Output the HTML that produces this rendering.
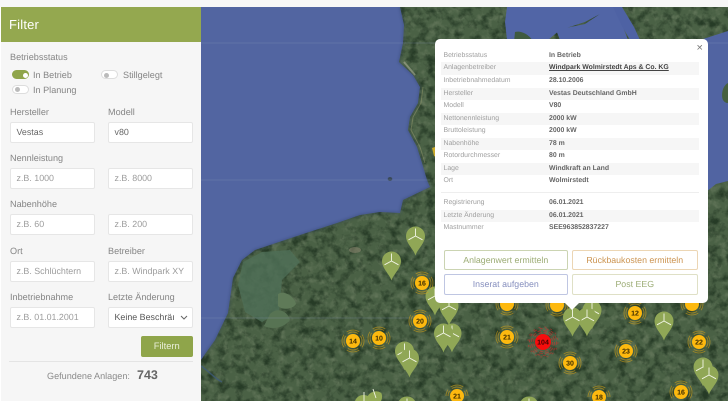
<!DOCTYPE html>
<html><head><meta charset="utf-8"><style>
*{box-sizing:border-box}
html,body{margin:0;padding:0;width:728px;height:401px;overflow:hidden;background:#f7f7f7;font-family:"Liberation Sans",sans-serif;text-rendering:geometricPrecision}
.a{position:absolute;white-space:nowrap}
#side{position:absolute;left:0;top:7px;width:201px;height:394px;background:#f6f6f6;border-left:1px solid #fff}
#head{position:absolute;left:1px;top:7px;width:200px;height:35px;background:#94a84f;color:#fff;font-size:13px;line-height:35px;padding-left:8px;letter-spacing:.2px}
.l{position:absolute;font-size:9.1px;color:#858585;line-height:12px;white-space:nowrap}
.i{position:absolute;width:85.5px;height:21px;background:#fff;border:1px solid #e6e6e6;border-radius:2px;font-size:8.9px;line-height:19px;padding-left:6px;color:#9c9c9c;white-space:nowrap;overflow:hidden}
.v{color:#666}
.t{position:absolute;width:17px;height:9px;border-radius:5px;background:#fff;border:1px solid #ddd}
.t:before{content:"";position:absolute;left:2px;top:1.5px;width:5px;height:5px;border-radius:50%;background:#bbb}
.t.on{background:#8fa54a;border-color:#8fa54a}
.t.on:before{left:10px;background:#fff}
#pop{position:absolute;left:435px;top:39px;width:273px;height:264px;background:#fff;border-radius:5px}
#arrow{position:absolute;left:565px;top:303px;width:0;height:0;border-left:7px solid transparent;border-right:7px solid transparent;border-top:7px solid #fff}
.r{position:absolute;left:441px;width:258px;height:12.5px;font-size:6.9px;line-height:12.5px;color:#a0a0a0}
.r.s{background:#f6f6f6}
.r span{position:absolute;left:2.5px;white-space:nowrap}
.r b{position:absolute;left:108px;color:#666;white-space:nowrap;font-weight:700}
.b{position:absolute;height:20.5px;background:#fff;border-radius:2px;font-size:8.8px;line-height:18.5px;text-align:center;border:1px solid}
</style></head><body>
<svg class="a" style="left:201px;top:7px;filter:blur(.3px)" width="527" height="394" viewBox="201 7 527 394">
<defs>
<filter id="n1" x="0" y="0" width="100%" height="100%" color-interpolation-filters="sRGB"><feTurbulence type="fractalNoise" baseFrequency=".11" numOctaves="4" seed="7"/><feColorMatrix values="0 0 0 0 .15 0 0 0 0 .23 0 0 0 0 .15 2.8 0 0 0 -1.250"/></filter>
<filter id="n2" x="0" y="0" width="100%" height="100%" color-interpolation-filters="sRGB"><feTurbulence type="fractalNoise" baseFrequency=".14" numOctaves="3" seed="21"/><feColorMatrix values="0 0 0 0 .42 0 0 0 0 .49 0 0 0 0 .38 0 1.800 0 0 -.85"/></filter>
<filter id="bs"><feGaussianBlur stdDeviation="1.2"/></filter>
<g id="pin"><path d="M0 19.500C-2 13-9.500 7.500-9.500 0A9.500 9.500 0 1 1 9.500 0C9.500 7.500 2 13 0 19.500Z" fill="#90a756"/><path d="M0 0L0-7.500M0 0L-7 3.800M0 0L7 3.800" stroke="#f2f5e6" stroke-width=".9" fill="none"/></g>
<g id="ar"><path d="M-5.160-7.370A9 9 0 0 1 5.160-7.370M-6.300-9A11 11 0 0 1 6.300-9"/></g>
<g id="cl" fill="none"><g stroke="#dba514" stroke-width=".9" opacity=".55">
<use href="#ar"/><use href="#ar" transform="rotate(90)"/><use href="#ar" transform="rotate(180)"/><use href="#ar" transform="rotate(270)"/></g><circle r="7" fill="#fdb90f"/></g>
<g id="clb" fill="none"><g stroke="#dba514" stroke-width=".9" opacity=".55">
<use href="#ar"/><use href="#ar" transform="rotate(90)"/><use href="#ar" transform="rotate(270)"/></g><circle r="7" fill="#fdb90f"/></g>
<g id="clc" fill="none" stroke="#dba514" stroke-width=".9" opacity=".55"><use href="#ar"/><path d="M-9 0A9 9 0 0 1-7.370-5.160M-11 0A11 11 0 0 1-9-6.300M9 0A9 9 0 0 0 7.370-5.160M11 0A11 11 0 0 0 9-6.300"/></g>
<g id="clr" fill="none"><g stroke="#e8282a" opacity=".5"><circle r="9.500" stroke-width="1" stroke-dasharray="3 2"/><circle r="11.500" stroke-width="1" stroke-dasharray="4 2"/><circle r="13.500" stroke-width="1" stroke-dasharray="3 3"/><circle r="15" stroke-width=".8" stroke-dasharray="2 4"/></g><circle r="8" fill="#f60d0d"/></g>
</defs>
<rect x="201" y="7" width="527" height="394" fill="#4a6145"/>
<rect x="201" y="7" width="527" height="394" filter="url(#n2)"/>
<rect x="201" y="7" width="527" height="394" filter="url(#n1)"/>
<!-- polders -->
<path d="M243 262L262 252 290 250 300 262 282 280 279 312 262 322 245 312 238 285Z" fill="#4f6f58" opacity=".8"/>
<path d="M278 294C284 290 294 296 296 304 292 310 282 310 278 306Z" fill="#5f7a58"/>
<path d="M270 314C278 306 288 312 290 320 284 328 272 330 264 326Z" fill="#577353"/>
<ellipse cx="355" cy="250" rx="6" ry="3" fill="#8a8770" opacity=".6"/>
<!-- seas -->
<path d="M201 7H400L404 25 403 43 399 62 413 75 420 87 418 103 410 117 408 130 417 147 422 163 427 180 430 187 403 200 400 213 380 212 360 215 337 223 300 235 255 250 242 260 233 278 228 313 215 340 203 357 201 360Z" fill="#5265a1"/>
<path d="M507 7H615L622 24 628 40H560L556 30 585 24 600 14 585 22 560 30 548 40 530 42 507 40 505 22Z" fill="#5165a6"/>
<path d="M613 7H622L634 27 640 40H630L622 26Z" fill="#4e62a4"/>
<path d="M700 40L728 31V181L716 184 706 192 696 192Z" fill="#5164a2"/>
<path d="M728 83C722 86 721 96 723 100 725 103 727 103 728 103Z" fill="#46603f"/>
<path d="M515 32C522 30 530 36 532 40L524 44 514 42Z" fill="#3f5a40"/>
<path d="M400 7L404 25 403 43 399 62 413 75 420 87 418 103 410 117 408 130 417 147 422 163 427 180 430 187 403 200 400 213 380 212 360 215 337 223 300 235 255 250 242 260 233 278 228 313 215 340 203 357" fill="none" stroke="#27385c" stroke-width="2" opacity=".35" filter="url(#bs)"/>
<path d="M420 87L418 103 410 117 408 130 417 147 422 163" fill="none" stroke="#c9c28a" stroke-width="1" opacity=".3" transform="translate(3 0)"/>
<path d="M404 62L415 75" fill="none" stroke="#a9ad92" stroke-width="2" opacity=".6"/>
<ellipse cx="390" cy="179" rx="2.300" ry="2" fill="#3a4a5a"/>
<path d="M201 366C210 372 214 378 222 382" fill="none" stroke="#3f5b78" stroke-width="1.500" opacity=".8"/>
<path d="M432 148L438 146 438 158 434 156Z" fill="#c9a92a"/>
<path d="M201 43H728M201 180H430M201 318H430" stroke="#8a9ac0" stroke-opacity=".25" stroke-width="1"/>
<!-- hidden clusters -->
<use href="#cl" x="507" y="304"/><use href="#cl" x="557" y="305"/><use href="#cl" x="692" y="304"/>
<!-- pins -->
<use href="#pin" x="435" y="296"/><use href="#pin" x="449" y="306"/>
<use href="#pin" x="415.500" y="236"/><use href="#pin" x="391.500" y="261"/>
<use href="#pin" x="404.500" y="351"/><use href="#pin" x="409.500" y="358"/>
<use href="#pin" x="452" y="333"/><use href="#pin" x="443.500" y="333"/>
<use href="#pin" x="592" y="310"/><use href="#pin" x="587" y="317"/><use href="#pin" x="572.500" y="317"/>
<use href="#pin" x="664" y="321"/><use href="#pin" x="703" y="367"/><use href="#pin" x="709" y="375"/>
<!-- pins cut by the bottom edge -->
<path d="M366.500 401A9.500 9.500 0 0 1 381.300 393A9.500 9.500 0 0 1 381 401Z" fill="#93aa55"/>
<path d="M355 401A9 9 0 0 1 372 401Z" fill="#93aa55"/>
<path d="M364 392V401M373 389L376 398" stroke="#f2f5e6" stroke-width=".9" fill="none"/>
<path d="M398.900 401A9.500 9.500 0 0 1 415.100 401Z" fill="#90a756"/>
<path d="M407 398.500V401" stroke="#f2f5e6" stroke-width=".9"/>
<path d="M520.900 401A9.500 9.500 0 0 1 537.100 401Z" fill="#90a756"/>
<path d="M529 398.500V401" stroke="#f2f5e6" stroke-width=".9"/>
<!-- clusters -->
<use href="#cl" x="422" y="283"/><use href="#cl" x="420" y="321"/><use href="#cl" x="353" y="341"/><use href="#cl" x="379" y="338"/>
<use href="#cl" x="507" y="337"/><use href="#cl" x="570" y="363"/><use href="#cl" x="626" y="351"/><use href="#cl" x="635" y="313"/>
<use href="#cl" x="699" y="342"/><use href="#clb" x="681" y="392"/>
<use href="#clc" x="599" y="397"/><path d="M593.260 401A7 7 0 1 1 604.740 401Z" fill="#fdb90f"/>
<use href="#clc" x="457" y="396"/><path d="M452.100 401A7 7 0 1 1 461.900 401Z" fill="#fdb90f"/>
<use href="#clr" x="543" y="342"/>
<g font-family="Liberation Sans,sans-serif" font-size="7" font-weight="700" fill="#3a2a00" text-anchor="middle">
<text x="422" y="285.500">16</text><text x="420" y="323.500">20</text><text x="353" y="343.500">14</text><text x="379" y="340.500">10</text>
<text x="507" y="339.500">21</text><text x="570" y="365.500">30</text><text x="626" y="353.500">23</text><text x="635" y="315.500">12</text>
<text x="699" y="344.500">22</text><text x="681" y="394.500">16</text><text x="599" y="399.500">18</text><text x="457" y="398.500">21</text>
<text x="543" y="344.500" fill="#400">104</text>
</g>
</svg>
<div id="side"></div>
<div id="head">Filter</div>
<div class="l" style="left:10px;top:51px">Betriebsstatus</div>
<div class="t on" style="left:12px;top:70px"></div><div class="l" style="left:33px;top:69px">In Betrieb</div>
<div class="t" style="left:101px;top:70px"></div><div class="l" style="left:123px;top:69px">Stillgelegt</div>
<div class="t" style="left:12px;top:84.500px"></div><div class="l" style="left:33px;top:83.500px">In Planung</div>
<div class="l" style="left:10px;top:105.500px">Hersteller</div><div class="l" style="left:108px;top:105.500px">Modell</div>
<div class="i v" style="left:9.500px;top:122px">Vestas</div><div class="i v" style="left:107.500px;top:122px">v80</div>
<div class="l" style="left:10px;top:152px">Nennleistung</div>
<div class="i" style="left:9.500px;top:168px">z.B. 1000</div><div class="i" style="left:107.500px;top:168px">z.B. 8000</div>
<div class="l" style="left:10px;top:198px">Nabenhöhe</div>
<div class="i" style="left:9.500px;top:214px">z.B. 60</div><div class="i" style="left:107.500px;top:214px">z.B. 200</div>
<div class="l" style="left:10px;top:244.500px">Ort</div><div class="l" style="left:108px;top:244.500px">Betreiber</div>
<div class="i" style="left:9.500px;top:261px;height:20.500px">z.B. Schlüchtern</div><div class="i" style="left:107.500px;top:261px;height:20.500px">z.B. Windpark XY</div>
<div class="l" style="left:10px;top:290.500px">Inbetriebnahme</div><div class="l" style="left:108px;top:290.500px">Letzte Änderung</div>
<div class="i" style="left:9.500px;top:307px;height:20.500px">z.B. 01.01.2001</div>
<div class="i v" style="left:107.500px;top:307px;height:20.500px;color:#555">Keine Beschräı<svg class="a" style="left:71px;top:7px" width="8" height="6" viewBox="0 0 8 6"><path d="M1 1L4 4 7 1" fill="none" stroke="#666" stroke-width="1"/></svg></div>
<div class="a" style="left:141px;top:336px;width:51.500px;height:20.500px;background:#8fa54a;border-radius:2px;color:#e8eed8;font-size:9.400px;line-height:20.500px;text-align:center">Filtern</div>
<div class="a" style="left:9px;top:361px;width:184px;height:1px;background:#e4e4e4"></div>
<div class="l" style="left:47px;top:370px;color:#8a8a8a">Gefundene Anlagen:</div>
<div class="a" style="left:137px;top:367.500px;font-size:12.500px;font-weight:700;color:#666;line-height:15px">743</div>

<div id="pop"></div><div id="arrow"></div>
<div class="a" style="left:696.500px;top:42.500px;font-size:11px;line-height:11px;color:#777">×</div>
<div class="r" style="top:49.500px"><span>Betriebsstatus</span><b>In Betrieb</b></div>
<div class="r s" style="top:62px"><span>Anlagenbetreiber</span><b style="color:#444;text-decoration:underline">Windpark Wolmirstedt Aps &amp; Co. KG</b></div>
<div class="r" style="top:75px"><span>Inbetriebnahmedatum</span><b>28.10.2006</b></div>
<div class="r s" style="top:87.500px"><span>Hersteller</span><b>Vestas Deutschland GmbH</b></div>
<div class="r" style="top:100px"><span>Modell</span><b>V80</b></div>
<div class="r s" style="top:112.500px"><span>Nettonennleistung</span><b>2000 kW</b></div>
<div class="r" style="top:125px"><span>Bruttoleistung</span><b>2000 kW</b></div>
<div class="r s" style="top:137.500px"><span>Nabenhöhe</span><b>78 m</b></div>
<div class="r" style="top:150px"><span>Rotordurchmesser</span><b>80 m</b></div>
<div class="r s" style="top:162.500px"><span>Lage</span><b>Windkraft an Land</b></div>
<div class="r" style="top:175px"><span>Ort</span><b>Wolmirstedt</b></div>
<div class="a" style="left:441px;top:192px;width:258px;height:1px;background:#eee"></div>
<div class="r" style="top:197px"><span>Registrierung</span><b>06.01.2021</b></div>
<div class="r s" style="top:209.500px"><span>Letzte Änderung</span><b>06.01.2021</b></div>
<div class="r" style="top:222px"><span>Mastnummer</span><b>SEE963852837227</b></div>
<div class="b" style="left:443.500px;top:249.500px;width:124.500px;color:#9cac75;border-color:#cbd4b2">Anlagenwert ermitteln</div>
<div class="b" style="left:572px;top:249.500px;width:125.500px;color:#cb9350;border-color:#ecd6b4">Rückbaukosten ermitteln</div>
<div class="b" style="left:443.500px;top:274px;width:124.500px;color:#868fbe;border-color:#bfc6e2">Inserat aufgeben</div>
<div class="b" style="left:572px;top:274px;width:125.500px;color:#9cac75;border-color:#dfe0c6">Post EEG</div>
</body></html>
